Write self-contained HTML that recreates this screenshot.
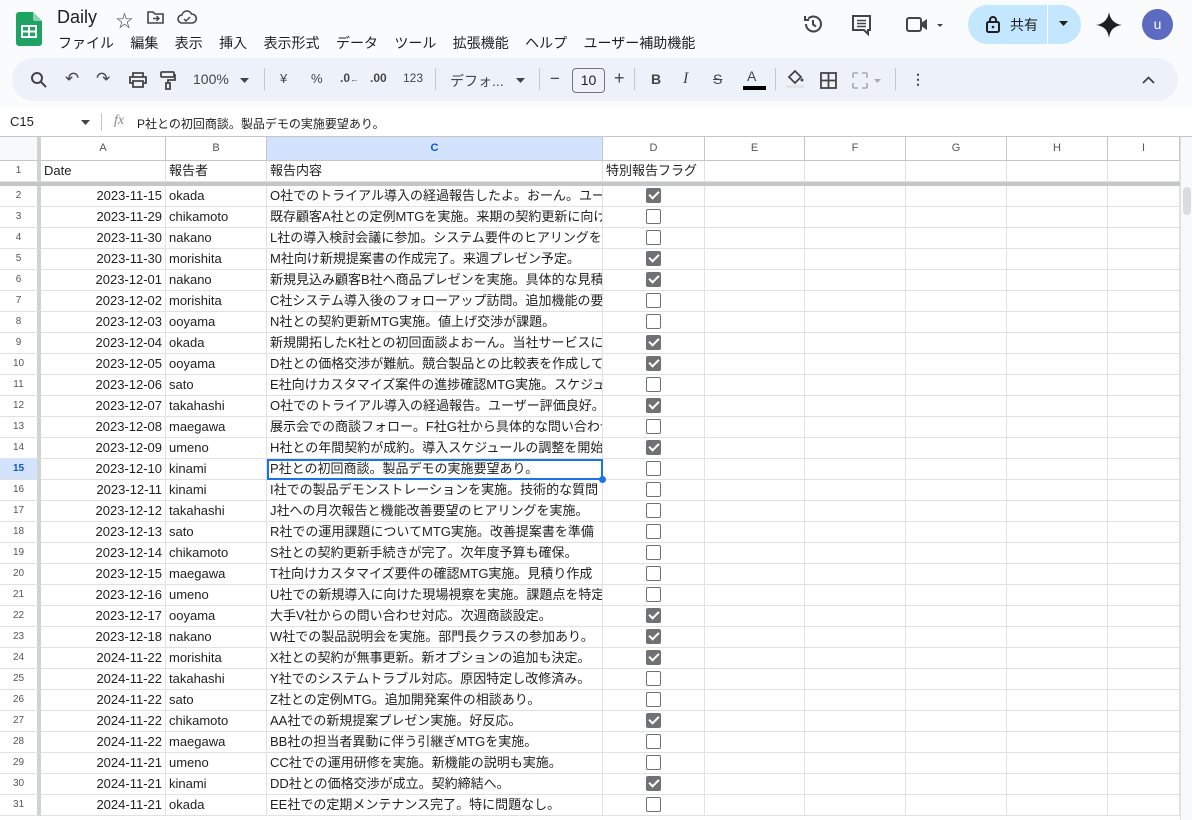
<!DOCTYPE html>
<html><head><meta charset="utf-8"><style>
*{box-sizing:border-box;margin:0;padding:0}
body{width:1192px;height:820px;overflow:hidden;background:#fff;font-family:"Liberation Sans","Noto Sans CJK JP",sans-serif;color:#1f1f1f;position:relative}
.top{position:absolute;left:0;top:0;width:1192px;height:108px;background:#f9fbfd}
.a{position:absolute}
.menu span{margin-right:16.4px}
.tb{position:absolute;left:12px;top:58px;width:1166px;height:43px;background:#edf2fa;border-radius:22px}
.ti{position:absolute;top:71px;font-size:14px;color:#444746}
.sep{position:absolute;top:68px;width:1px;height:22px;background:#c7c7c7}
.grid{position:absolute;left:0;top:137px}
.r{display:flex;height:21px}
.c{height:21px;border-right:1px solid #e1e1e1;border-bottom:1px solid #e1e1e1;font-size:13px;line-height:20px;padding:0 3px;white-space:nowrap;overflow:hidden;flex:none;position:relative}
.h{background:#fff;color:#555;font-size:11px;text-align:center;border-color:#c4c7c5}
.rh{width:41px;text-align:center;font-size:10px;color:#555;border-right:4px solid #d0d2d4}
.w0{width:41px}.wA{width:125px;text-align:right}.wB{width:101px}.wC{width:336px}.wD{width:102px;text-align:center}.wE{width:100px}.wF{width:101px}.wG{width:101px}.wH{width:101px}.wI{width:72px}
.cb{display:inline-block;width:15px;height:15px;border:1.6px solid #6f7275;border-radius:2px;vertical-align:middle;margin-top:-2px;position:relative}
.ck{background:#6f7275}
.ck:after{content:"";position:absolute;left:3.5px;top:0px;width:4px;height:8px;border:solid #fff;border-width:0 2px 2px 0;transform:rotate(45deg)}
</style></head><body>
<div class="top"></div>
<svg class="a" style="left:16px;top:12px" width="26" height="34" viewBox="0 0 26 34"><path d="M3 0h14l9 9v22a3 3 0 0 1-3 3H3a3 3 0 0 1-3-3V3a3 3 0 0 1 3-3z" fill="#1ea362"/><path d="M17 0l9 9h-7a2 2 0 0 1-2-2z" fill="#8ed1b1"/><rect x="6" y="14" width="14" height="11" fill="none" stroke="#fff" stroke-width="2"/><path d="M6 19.5h14M13 14v11" stroke="#fff" stroke-width="2"/></svg>
<div class="a" style="left:57px;top:7px;font-size:18px">Daily</div>
<div class="a" style="left:116px;top:7px;font-size:17px;color:#444">☆</div>
<svg class="a" style="left:147px;top:10px" width="18" height="14"><path d="M1 2h5l2 2h8v9H1z" fill="none" stroke="#444" stroke-width="1.6"/><path d="M6 8.5h6M9.5 6l2.5 2.5-2.5 2.5" stroke="#444" stroke-width="1.4" fill="none"/></svg>
<svg class="a" style="left:177px;top:10px" width="20" height="15"><path d="M5 13a4 4 0 0 1 0-8 5 5 0 0 1 9.5-1A4.5 4.5 0 0 1 15 13z" fill="none" stroke="#444" stroke-width="1.6"/><path d="M7 9l2 2 4-4" stroke="#444" stroke-width="1.5" fill="none"/></svg>
<div class="a menu" style="left:58px;top:33px;font-size:14px;color:#1f1f1f"><span>ファイル</span><span>編集</span><span>表示</span><span>挿入</span><span>表示形式</span><span>データ</span><span>ツール</span><span>拡張機能</span><span>ヘルプ</span><span>ユーザー補助機能</span></div>
<svg class="a" style="left:802px;top:13px" width="22" height="22" viewBox="0 0 22 22"><path d="M4 11a7.5 7.5 0 1 0 2.2-5.3M3 3v4h4" fill="none" stroke="#444" stroke-width="2"/><path d="M11 7v4.5l3 2" fill="none" stroke="#444" stroke-width="2"/></svg>
<svg class="a" style="left:851px;top:14px" width="22" height="22"><path d="M2 2h17v14h-2v4l-4-4H2z" fill="none" stroke="#444" stroke-width="2"/><path d="M6 6.5h9M6 9.5h9M6 12.5h9" stroke="#444" stroke-width="1.6"/></svg>
<svg class="a" style="left:905px;top:15px" width="40" height="20"><rect x="2" y="3" width="14" height="13" rx="2" fill="none" stroke="#444" stroke-width="2"/><path d="M16 8l6-4v11l-6-4z" fill="#444"/><path d="M32 9l3 3 3-3z" fill="#444"/></svg>
<div class="a" style="left:968px;top:5px;width:113px;height:39px;background:#c2e7ff;border-radius:20px"></div>
<div class="a" style="left:1047px;top:5px;width:1px;height:39px;background:#fff"></div>
<svg class="a" style="left:986px;top:15px" width="14" height="18"><rect x="1" y="7" width="12" height="10" rx="1.5" fill="none" stroke="#1f1f1f" stroke-width="2"/><path d="M4 7V5a3 3 0 0 1 6 0v2" fill="none" stroke="#1f1f1f" stroke-width="2"/><circle cx="7" cy="12" r="1.3" fill="#1f1f1f"/></svg>
<div class="a" style="left:1010px;top:15px;font-size:14px">共有</div>
<svg class="a" style="left:1058px;top:20px" width="12" height="8"><path d="M1 1h9l-4.5 5z" fill="#1f1f1f"/></svg>
<svg class="a" style="left:1096px;top:12px" width="26" height="26"><path d="M13 0c1 7 5 12 13 13-8 1-12 5-13 13-1-8-5-12-13-13 8-1 12-6 13-13z" fill="#1f1f1f"/></svg>
<div class="a" style="left:1142px;top:9px;width:31px;height:31px;border-radius:50%;background:#5c6bc0;color:#fff;font-size:14px;text-align:center;line-height:31px">u</div>
<div class="tb"></div>
<svg class="a" style="left:30px;top:71px" width="18" height="18"><circle cx="7" cy="7" r="5" fill="none" stroke="#444" stroke-width="2"/><path d="M11 11l5 5" stroke="#444" stroke-width="2"/></svg>
<div class="ti" style="left:65px;top:69px;font-size:17px">↶</div>
<div class="ti" style="left:96px;top:69px;font-size:17px">↷</div>
<svg class="a" style="left:129px;top:72px" width="18" height="16"><path d="M4 5V1h10v4M4 11H1V5h16v6h-3M4 9h10v6H4z" fill="none" stroke="#444" stroke-width="1.8"/></svg>
<svg class="a" style="left:160px;top:71px" width="16" height="19"><rect x="1" y="1" width="13" height="5" rx="1" fill="none" stroke="#444" stroke-width="1.8"/><path d="M14 4h1v5H8v3M6 12h4v6H6z" fill="none" stroke="#444" stroke-width="1.8"/></svg>
<div class="ti" style="left:193px">100%</div>
<svg class="a" style="left:240px;top:78px" width="10" height="6"><path d="M0 0h9l-4.5 5z" fill="#444"/></svg>
<div class="sep" style="left:264px"></div>
<div class="ti" style="left:280px;font-size:13px">¥</div>
<div class="ti" style="left:311px;font-size:13px">%</div>
<div class="ti" style="left:340px;font-size:12px;font-weight:bold">.0<span style="font-size:9px">←</span></div>
<div class="ti" style="left:370px;font-size:12px;font-weight:bold">.00</div>
<div class="ti" style="left:403px;font-size:12px">123</div>
<div class="sep" style="left:435px"></div>
<div class="ti" style="left:450px">デフォ...</div>
<svg class="a" style="left:516px;top:78px" width="10" height="6"><path d="M0 0h9l-4.5 5z" fill="#444"/></svg>
<div class="sep" style="left:539px"></div>
<div class="ti" style="left:550px;top:69px;font-size:17px">−</div>
<div class="a" style="left:572px;top:68px;width:33px;height:25px;border:1px solid #747775;border-radius:4px;font-size:14px;text-align:center;line-height:23px">10</div>
<div class="ti" style="left:614px;top:68px;font-size:18px">+</div>
<div class="sep" style="left:634px"></div>
<div class="ti" style="left:651px;font-weight:bold">B</div>
<div class="ti" style="left:683px;font-style:italic;font-family:'Liberation Serif',serif;font-size:16px;top:70px">I</div>
<div class="ti" style="left:713px;text-decoration:line-through">S</div>
<div class="ti" style="left:747px;top:68px">A</div>
<div class="a" style="left:743px;top:86px;width:23px;height:4px;background:#000"></div>
<div class="sep" style="left:775px"></div>
<svg class="a" style="left:786px;top:68px" width="18" height="20"><path d="M3 9l6-6 6 6-6 6z" fill="none" stroke="#444" stroke-width="1.8"/><circle cx="16" cy="12" r="1.5" fill="#444"/><rect x="0" y="17" width="18" height="3" fill="#e3e3e3"/></svg>
<svg class="a" style="left:820px;top:72px" width="17" height="17"><rect x="1" y="1" width="15" height="15" fill="none" stroke="#444" stroke-width="1.8"/><path d="M1 8.5h15M8.5 1v15" stroke="#444" stroke-width="1.8"/></svg>
<svg class="a" style="left:852px;top:72px" width="30" height="17"><path d="M1 1h5M1 1v5M1 16h5M1 16v-5M15 1h-5M15 1v5M15 16h-5M15 16v-5" stroke="#aaa" stroke-width="1.6" fill="none"/><path d="M22 7h7l-3.5 4z" fill="#aaa"/></svg>
<div class="sep" style="left:895px"></div>
<div class="ti" style="left:911px;font-weight:bold">⋮</div>
<svg class="a" style="left:1142px;top:76px" width="13" height="8"><path d="M1 7l5.5-5.5L12 7" fill="none" stroke="#444" stroke-width="1.8"/></svg>
<div class="a" style="left:10px;top:114px;font-size:13px">C15</div>
<svg class="a" style="left:81px;top:120px" width="10" height="6"><path d="M0 0h9l-4.5 5z" fill="#444"/></svg>
<div class="a" style="left:101px;top:113px;width:1px;height:18px;background:#c7c7c7"></div>
<div class="a" style="left:114px;top:113px;font-size:14px;font-style:italic;color:#888;font-family:'Liberation Serif',serif">fx</div>
<div class="a" style="left:137px;top:115px;font-size:12px">P社との初回商談。製品デモの実施要望あり。</div>
<div class="a" style="left:0;top:136px;width:1192px;height:1px;background:#c4c7c5"></div>
<div class="grid">
<div class="r" style="height:24px"><div class="c h rh" style="height:24px;background:#f8f9fa"></div><div class="c h wA" style="text-align:center;height:24px;line-height:23px">A</div><div class="c h wB" style="height:24px;line-height:23px">B</div><div class="c h wC" style="background:#d3e3fd;color:#0b57d0;font-weight:bold;height:24px;line-height:23px">C</div><div class="c h wD" style="height:24px;line-height:23px">D</div><div class="c h wE" style="height:24px;line-height:23px">E</div><div class="c h wF" style="height:24px;line-height:23px">F</div><div class="c h wG" style="height:24px;line-height:23px">G</div><div class="c h wH" style="height:24px;line-height:23px">H</div><div class="c h wI" style="height:24px;line-height:23px">I</div></div>
<div class="r"><div class="c rh">1</div><div class="c wA" style="text-align:left">Date</div><div class="c wB">報告者</div><div class="c wC">報告内容</div><div class="c wD" style="text-align:left">特別報告フラグ</div><div class="c wE"></div><div class="c wF"></div><div class="c wG"></div><div class="c wH"></div><div class="c wI"></div></div>
<div style="height:4px;width:1180px;background:#c4c7c5"></div>
<div class="r"><div class="c rh">2</div><div class="c wA">2023-11-15</div><div class="c wB">okada</div><div class="c wC">O社でのトライアル導入の経過報告したよ。おーん。ユーザー評価</div><div class="c wD"><span class="cb ck"></span></div><div class="c wE"></div><div class="c wF"></div><div class="c wG"></div><div class="c wH"></div><div class="c wI"></div></div>
<div class="r"><div class="c rh">3</div><div class="c wA">2023-11-29</div><div class="c wB">chikamoto</div><div class="c wC">既存顧客A社との定例MTGを実施。来期の契約更新に向け</div><div class="c wD"><span class="cb"></span></div><div class="c wE"></div><div class="c wF"></div><div class="c wG"></div><div class="c wH"></div><div class="c wI"></div></div>
<div class="r"><div class="c rh">4</div><div class="c wA">2023-11-30</div><div class="c wB">nakano</div><div class="c wC">L社の導入検討会議に参加。システム要件のヒアリングを</div><div class="c wD"><span class="cb"></span></div><div class="c wE"></div><div class="c wF"></div><div class="c wG"></div><div class="c wH"></div><div class="c wI"></div></div>
<div class="r"><div class="c rh">5</div><div class="c wA">2023-11-30</div><div class="c wB">morishita</div><div class="c wC">M社向け新規提案書の作成完了。来週プレゼン予定。</div><div class="c wD"><span class="cb ck"></span></div><div class="c wE"></div><div class="c wF"></div><div class="c wG"></div><div class="c wH"></div><div class="c wI"></div></div>
<div class="r"><div class="c rh">6</div><div class="c wA">2023-12-01</div><div class="c wB">nakano</div><div class="c wC">新規見込み顧客B社へ商品プレゼンを実施。具体的な見積</div><div class="c wD"><span class="cb ck"></span></div><div class="c wE"></div><div class="c wF"></div><div class="c wG"></div><div class="c wH"></div><div class="c wI"></div></div>
<div class="r"><div class="c rh">7</div><div class="c wA">2023-12-02</div><div class="c wB">morishita</div><div class="c wC">C社システム導入後のフォローアップ訪問。追加機能の要望</div><div class="c wD"><span class="cb"></span></div><div class="c wE"></div><div class="c wF"></div><div class="c wG"></div><div class="c wH"></div><div class="c wI"></div></div>
<div class="r"><div class="c rh">8</div><div class="c wA">2023-12-03</div><div class="c wB">ooyama</div><div class="c wC">N社との契約更新MTG実施。値上げ交渉が課題。</div><div class="c wD"><span class="cb"></span></div><div class="c wE"></div><div class="c wF"></div><div class="c wG"></div><div class="c wH"></div><div class="c wI"></div></div>
<div class="r"><div class="c rh">9</div><div class="c wA">2023-12-04</div><div class="c wB">okada</div><div class="c wC">新規開拓したK社との初回面談よおーん。当社サービスに</div><div class="c wD"><span class="cb ck"></span></div><div class="c wE"></div><div class="c wF"></div><div class="c wG"></div><div class="c wH"></div><div class="c wI"></div></div>
<div class="r"><div class="c rh">10</div><div class="c wA">2023-12-05</div><div class="c wB">ooyama</div><div class="c wC">D社との価格交渉が難航。競合製品との比較表を作成して</div><div class="c wD"><span class="cb ck"></span></div><div class="c wE"></div><div class="c wF"></div><div class="c wG"></div><div class="c wH"></div><div class="c wI"></div></div>
<div class="r"><div class="c rh">11</div><div class="c wA">2023-12-06</div><div class="c wB">sato</div><div class="c wC">E社向けカスタマイズ案件の進捗確認MTG実施。スケジュール</div><div class="c wD"><span class="cb"></span></div><div class="c wE"></div><div class="c wF"></div><div class="c wG"></div><div class="c wH"></div><div class="c wI"></div></div>
<div class="r"><div class="c rh">12</div><div class="c wA">2023-12-07</div><div class="c wB">takahashi</div><div class="c wC">O社でのトライアル導入の経過報告。ユーザー評価良好。</div><div class="c wD"><span class="cb ck"></span></div><div class="c wE"></div><div class="c wF"></div><div class="c wG"></div><div class="c wH"></div><div class="c wI"></div></div>
<div class="r"><div class="c rh">13</div><div class="c wA">2023-12-08</div><div class="c wB">maegawa</div><div class="c wC">展示会での商談フォロー。F社G社から具体的な問い合わせ</div><div class="c wD"><span class="cb"></span></div><div class="c wE"></div><div class="c wF"></div><div class="c wG"></div><div class="c wH"></div><div class="c wI"></div></div>
<div class="r"><div class="c rh">14</div><div class="c wA">2023-12-09</div><div class="c wB">umeno</div><div class="c wC">H社との年間契約が成約。導入スケジュールの調整を開始</div><div class="c wD"><span class="cb ck"></span></div><div class="c wE"></div><div class="c wF"></div><div class="c wG"></div><div class="c wH"></div><div class="c wI"></div></div>
<div class="r"><div class="c rh" style="background:#d3e3fd;color:#0b57d0;font-weight:bold">15</div><div class="c wA">2023-12-10</div><div class="c wB">kinami</div><div class="c wC" style="outline:2px solid #1a73e8;outline-offset:-2px;overflow:visible">P社との初回商談。製品デモの実施要望あり。<span style="position:absolute;right:-4px;bottom:-4px;width:7px;height:7px;border-radius:50%;background:#1a73e8;z-index:2"></span></div><div class="c wD"><span class="cb"></span></div><div class="c wE"></div><div class="c wF"></div><div class="c wG"></div><div class="c wH"></div><div class="c wI"></div></div>
<div class="r"><div class="c rh">16</div><div class="c wA">2023-12-11</div><div class="c wB">kinami</div><div class="c wC">I社での製品デモンストレーションを実施。技術的な質問</div><div class="c wD"><span class="cb"></span></div><div class="c wE"></div><div class="c wF"></div><div class="c wG"></div><div class="c wH"></div><div class="c wI"></div></div>
<div class="r"><div class="c rh">17</div><div class="c wA">2023-12-12</div><div class="c wB">takahashi</div><div class="c wC">J社への月次報告と機能改善要望のヒアリングを実施。</div><div class="c wD"><span class="cb"></span></div><div class="c wE"></div><div class="c wF"></div><div class="c wG"></div><div class="c wH"></div><div class="c wI"></div></div>
<div class="r"><div class="c rh">18</div><div class="c wA">2023-12-13</div><div class="c wB">sato</div><div class="c wC">R社での運用課題についてMTG実施。改善提案書を準備</div><div class="c wD"><span class="cb"></span></div><div class="c wE"></div><div class="c wF"></div><div class="c wG"></div><div class="c wH"></div><div class="c wI"></div></div>
<div class="r"><div class="c rh">19</div><div class="c wA">2023-12-14</div><div class="c wB">chikamoto</div><div class="c wC">S社との契約更新手続きが完了。次年度予算も確保。</div><div class="c wD"><span class="cb"></span></div><div class="c wE"></div><div class="c wF"></div><div class="c wG"></div><div class="c wH"></div><div class="c wI"></div></div>
<div class="r"><div class="c rh">20</div><div class="c wA">2023-12-15</div><div class="c wB">maegawa</div><div class="c wC">T社向けカスタマイズ要件の確認MTG実施。見積り作成</div><div class="c wD"><span class="cb"></span></div><div class="c wE"></div><div class="c wF"></div><div class="c wG"></div><div class="c wH"></div><div class="c wI"></div></div>
<div class="r"><div class="c rh">21</div><div class="c wA">2023-12-16</div><div class="c wB">umeno</div><div class="c wC">U社での新規導入に向けた現場視察を実施。課題点を特定</div><div class="c wD"><span class="cb"></span></div><div class="c wE"></div><div class="c wF"></div><div class="c wG"></div><div class="c wH"></div><div class="c wI"></div></div>
<div class="r"><div class="c rh">22</div><div class="c wA">2023-12-17</div><div class="c wB">ooyama</div><div class="c wC">大手V社からの問い合わせ対応。次週商談設定。</div><div class="c wD"><span class="cb ck"></span></div><div class="c wE"></div><div class="c wF"></div><div class="c wG"></div><div class="c wH"></div><div class="c wI"></div></div>
<div class="r"><div class="c rh">23</div><div class="c wA">2023-12-18</div><div class="c wB">nakano</div><div class="c wC">W社での製品説明会を実施。部門長クラスの参加あり。</div><div class="c wD"><span class="cb ck"></span></div><div class="c wE"></div><div class="c wF"></div><div class="c wG"></div><div class="c wH"></div><div class="c wI"></div></div>
<div class="r"><div class="c rh">24</div><div class="c wA">2024-11-22</div><div class="c wB">morishita</div><div class="c wC">X社との契約が無事更新。新オプションの追加も決定。</div><div class="c wD"><span class="cb ck"></span></div><div class="c wE"></div><div class="c wF"></div><div class="c wG"></div><div class="c wH"></div><div class="c wI"></div></div>
<div class="r"><div class="c rh">25</div><div class="c wA">2024-11-22</div><div class="c wB">takahashi</div><div class="c wC">Y社でのシステムトラブル対応。原因特定し改修済み。</div><div class="c wD"><span class="cb"></span></div><div class="c wE"></div><div class="c wF"></div><div class="c wG"></div><div class="c wH"></div><div class="c wI"></div></div>
<div class="r"><div class="c rh">26</div><div class="c wA">2024-11-22</div><div class="c wB">sato</div><div class="c wC">Z社との定例MTG。追加開発案件の相談あり。</div><div class="c wD"><span class="cb"></span></div><div class="c wE"></div><div class="c wF"></div><div class="c wG"></div><div class="c wH"></div><div class="c wI"></div></div>
<div class="r"><div class="c rh">27</div><div class="c wA">2024-11-22</div><div class="c wB">chikamoto</div><div class="c wC">AA社での新規提案プレゼン実施。好反応。</div><div class="c wD"><span class="cb ck"></span></div><div class="c wE"></div><div class="c wF"></div><div class="c wG"></div><div class="c wH"></div><div class="c wI"></div></div>
<div class="r"><div class="c rh">28</div><div class="c wA">2024-11-22</div><div class="c wB">maegawa</div><div class="c wC">BB社の担当者異動に伴う引継ぎMTGを実施。</div><div class="c wD"><span class="cb"></span></div><div class="c wE"></div><div class="c wF"></div><div class="c wG"></div><div class="c wH"></div><div class="c wI"></div></div>
<div class="r"><div class="c rh">29</div><div class="c wA">2024-11-21</div><div class="c wB">umeno</div><div class="c wC">CC社での運用研修を実施。新機能の説明も実施。</div><div class="c wD"><span class="cb"></span></div><div class="c wE"></div><div class="c wF"></div><div class="c wG"></div><div class="c wH"></div><div class="c wI"></div></div>
<div class="r"><div class="c rh">30</div><div class="c wA">2024-11-21</div><div class="c wB">kinami</div><div class="c wC">DD社との価格交渉が成立。契約締結へ。</div><div class="c wD"><span class="cb ck"></span></div><div class="c wE"></div><div class="c wF"></div><div class="c wG"></div><div class="c wH"></div><div class="c wI"></div></div>
<div class="r"><div class="c rh">31</div><div class="c wA">2024-11-21</div><div class="c wB">okada</div><div class="c wC">EE社での定期メンテナンス完了。特に問題なし。</div><div class="c wD"><span class="cb"></span></div><div class="c wE"></div><div class="c wF"></div><div class="c wG"></div><div class="c wH"></div><div class="c wI"></div></div>
</div>
<div class="a" style="left:1180px;top:137px;width:12px;height:683px;background:#f8f9fa;border-left:1px solid #e1e1e1"></div>
<div class="a" style="left:1183px;top:187px;width:8px;height:28px;background:#dadce0;border-radius:4px"></div>
</body></html>
